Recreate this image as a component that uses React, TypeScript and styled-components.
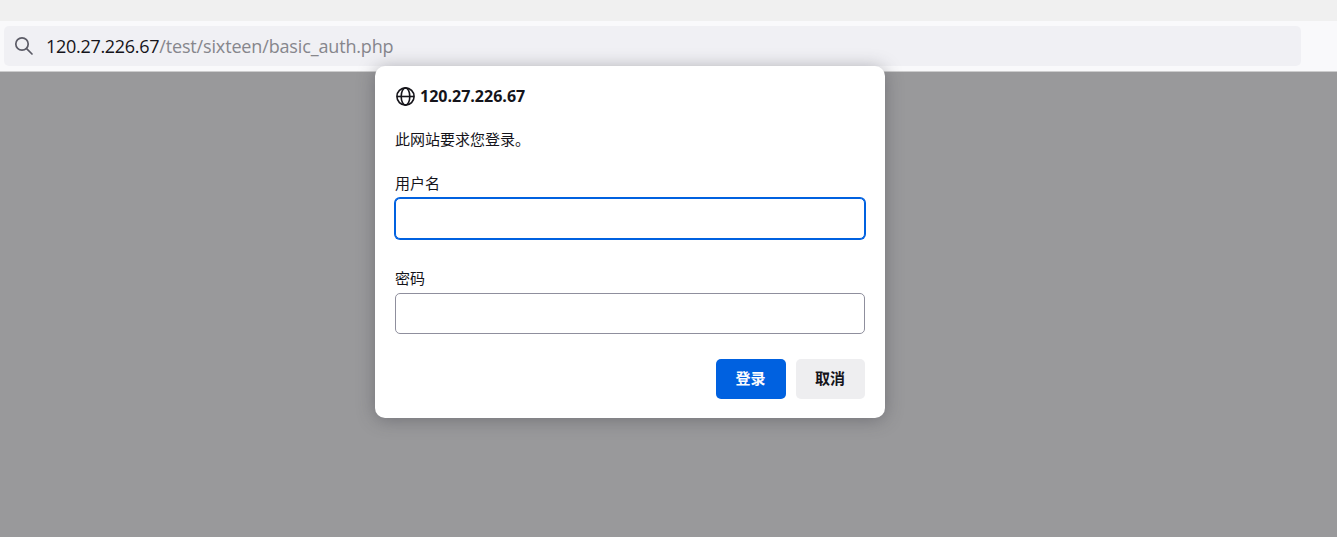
import React from "react";
import styled, { createGlobalStyle } from "styled-components";

const GlobalStyle = createGlobalStyle`
  * { box-sizing: border-box; }
  body {
    margin: 0;
    overflow: hidden;
    font-family: "Open Sans", "Noto Sans CJK SC", sans-serif;
    color: #15141a;
  }
`;

const Browser = styled.div`
  position: relative;
  display: flex;
  flex-direction: column;
  height: 537px;
  background: #99999b;
`;

const TabStrip = styled.div`
  height: 21px;
  background: #f0f0f0;
`;

const Toolbar = styled.div`
  height: 51px;
  padding: 5px 36px 5px 4px;
  background: #f9f9fb;
  border-bottom: 1px solid #cccccd;
`;

const AddressBar = styled.div`
  display: flex;
  align-items: center;
  height: 40px;
  padding-left: 10px;
  border-radius: 5px;
  background: #f0f0f4;
`;

const SearchIcon = styled.svg`
  width: 20px;
  height: 20px;
  margin-right: 12px;
  color: #5b5b66;
`;

const Address = styled.span<{ $dim?: boolean; $spacing: number }>`
  font-size: 18px;
  line-height: 24px;
  white-space: nowrap;
  color: ${(p) => (p.$dim ? "#86868c" : "#15141a")};
  letter-spacing: ${(p) => p.$spacing}px;
`;

const Dialog = styled.form`
  position: absolute;
  left: 375px;
  top: 66px;
  display: flex;
  flex-direction: column;
  width: 510px;
  height: 352px;
  padding: 19px 20px 19px;
  border-radius: 10px;
  background: #fff;
  box-shadow: 0 2px 18px rgba(58, 57, 68, 0.4);
`;

const DialogHeader = styled.div`
  display: flex;
  align-items: center;
  gap: 5px;
  height: 22px;
`;

const GlobeIcon = styled.svg`
  width: 20px;
  height: 20px;
  color: #15141a;
`;

const Host = styled.span`
  font-size: 16px;
  line-height: 20px;
  font-weight: 700;
`;

const Message = styled.p`
  margin: 22px 0 0;
  font-size: 15px;
  line-height: 20px;
`;

const Field = styled.div<{ $gap: number }>`
  display: flex;
  flex-direction: column;
  margin-top: ${(p) => p.$gap}px;
`;

const Label = styled.label`
  margin-bottom: 5px;
  font-size: 15px;
  line-height: 20px;
`;

const Input = styled.input<{ $active?: boolean }>`
  width: 100%;
  height: 41px;
  padding: 0 10px;
  border: 1px solid ${(p) => (p.$active ? "#0061e0" : "#8f8f9d")};
  border-radius: 5px;
  outline: none;
  background: #fff;
  box-shadow: ${(p) => (p.$active ? "0 0 0 1px #0061e0" : "none")};
`;

const Actions = styled.div`
  display: flex;
  justify-content: flex-end;
  gap: 10px;
  margin-top: auto;
`;

const Button = styled.button<{ $primary?: boolean }>`
  width: ${(p) => (p.$primary ? 70 : 69)}px;
  height: 40px;
  padding: 0 1px 2px 0;
  border: 0;
  border-radius: 5px;
  background: ${(p) => (p.$primary ? "#0061e0" : "#eeeef0")};
  color: ${(p) => (p.$primary ? "#fbfbfe" : "#15141a")};
  font-family: inherit;
  font-size: 15px;
  line-height: 20px;
  font-weight: 700;
`;

export default function App() {
  return (
    <>
      <GlobalStyle />
      <Browser>
        <TabStrip />
        <Toolbar>
          <AddressBar>
            <SearchIcon viewBox="0 0 20 20" fill="none" stroke="currentColor" strokeWidth="1.7" strokeLinecap="round">
              <circle cx="8" cy="8" r="6.2" />
              <path d="M12.6 12.6 18 18" />
            </SearchIcon>
            <Address $spacing={-0.3}>120.27.226.67</Address>
            <Address $dim $spacing={-0.15}>/test/sixteen/basic_auth.php</Address>
          </AddressBar>
        </Toolbar>
        <Dialog onSubmit={(e) => e.preventDefault()}>
          <DialogHeader>
            <GlobeIcon viewBox="0 0 20 20" fill="none" stroke="currentColor" strokeWidth="1.6">
              <circle cx="10.5" cy="10.5" r="8.6" />
              <ellipse cx="10.5" cy="10.5" rx="4.3" ry="8.6" />
              <path d="M2 10.5h17" />
            </GlobeIcon>
            <Host>120.27.226.67</Host>
          </DialogHeader>
          <Message>此网站要求您登录。</Message>
          <Field $gap={24}>
            <Label htmlFor="username">用户名</Label>
            <Input id="username" type="text" $active />
          </Field>
          <Field $gap={29}>
            <Label htmlFor="password">密码</Label>
            <Input id="password" type="password" />
          </Field>
          <Actions>
            <Button type="submit" $primary>登录</Button>
            <Button type="button">取消</Button>
          </Actions>
        </Dialog>
      </Browser>
    </>
  );
}
